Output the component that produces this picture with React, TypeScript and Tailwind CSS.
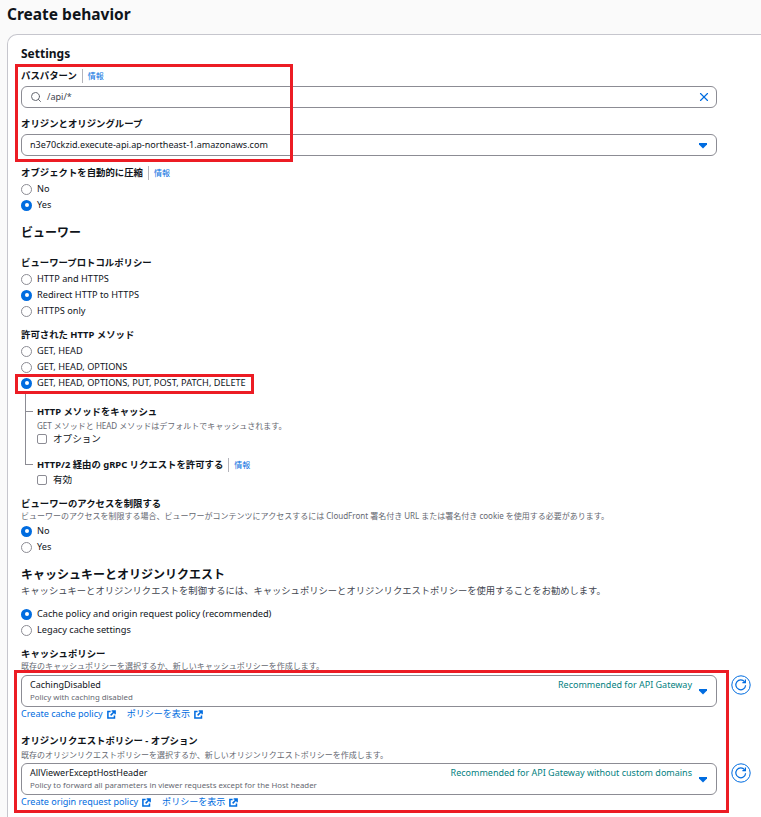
import React from 'react';
import { Search, X } from 'lucide-react';

const Info = () => (
  <span className="ml-[5px] border-l border-[#b4b4bb] pl-[5px] text-[8px] font-normal leading-[14px] text-[#006ce0]">情報</span>
);

const Label = ({ children, info, className = '' }: { children: React.ReactNode; info?: boolean; className?: string }) => (
  <div className={`flex h-[14px] items-center text-[9.4px] font-bold leading-[14px] text-[#0f141a] ${className}`}>
    {children}
    {info && <Info />}
  </div>
);

const Hint = ({ children, className = '' }: { children: React.ReactNode; className?: string }) => (
  <div className={`h-[13px] whitespace-nowrap text-[8px] leading-[13px] text-[#656871] ${className}`}>{children}</div>
);

const Radio = ({ label, checked }: { label: string; checked?: boolean }) => (
  <div className="flex h-[16px] items-center gap-[5px] text-[9.2px] text-[#0f141a]">
    {checked ? (
      <span className="flex h-[11px] w-[11px] items-center justify-center rounded-full bg-[#006ce0]">
        <span className="h-[4px] w-[4px] rounded-full bg-white" />
      </span>
    ) : (
      <span className="h-[11px] w-[11px] rounded-full border border-[#8c8c94] bg-white" />
    )}
    <span>{label}</span>
  </div>
);

const Check = ({ label }: { label: string }) => (
  <div className="flex h-[16px] items-center gap-[6px] pl-[12px] text-[9.6px] text-[#0f141a]">
    <span className="h-[10px] w-[10px] rounded-[2px] border border-[#8c8c94] bg-white" />
    <span>{label}</span>
  </div>
);

const Caret = () => (
  <svg width="10" height="7" viewBox="0 0 10 7" className="shrink-0">
    <path d="M1 1h8v1.5L5 6.5 1 2.5z" fill="#006ce0" />
  </svg>
);

const ExternalIcon = () => (
  <svg width="9" height="9" viewBox="0 0 10 10" fill="none" stroke="#006ce0" strokeWidth="1.7" className="ml-[4px] inline-block">
    <path d="M4 1.7H1v7.3h7.3V6" />
    <path d="M5.2 1h3.8v3.8M8.8 1.2 4 6" />
  </svg>
);

const Refresh = () => (
  <svg width="20" height="20" viewBox="0 0 20 20" fill="none" stroke="#006ce0" className="shrink-0">
    <circle cx="10" cy="10" r="9.2" strokeWidth="1" />
    <path d="M13.7 7a4.9 4.9 0 1 0 .9 3.2" strokeWidth="1.2" />
    <path d="M14.4 4.6v3h-3" strokeWidth="1.2" />
  </svg>
);

const LinkRow = ({ create }: { create: string }) => (
  <div className="flex h-[14px] items-center gap-[11px] text-[9.05px] leading-[14px] text-[#006ce0]">
    <span className="flex items-center">{create}<ExternalIcon /></span>
    <span className="flex items-center">ポリシーを表示<ExternalIcon /></span>
  </div>
);

const PolicySelect = ({ name, desc, tag }: { name: string; desc: string; tag: string }) => (
  <div className="flex items-start gap-[14px]">
    <div className="flex h-[32px] w-[696px] items-center rounded-[6px] border border-[#8c8c94] bg-white px-[8px]">
      <div className="min-w-0 flex-1 pb-[2px]">
        <div className="flex items-center justify-between pr-[6px] text-[9px] leading-[13px]">
          <span className="text-[#0f141a]">{name}</span>
          <span className="text-[#037f7f]">{tag}</span>
        </div>
        <div className="text-[7.85px] leading-[12px] text-[#656871]">{desc}</div>
      </div>
      <Caret />
    </div>
    <Refresh />
  </div>
);

export default function App() {
  return (
    <div
      className="relative h-[817px] w-[761px] overflow-hidden bg-[#fafafa]"
      style={{ fontFamily: '"Noto Sans", "Noto Sans CJK JP", sans-serif' }}
    >
      <h1 className="flex h-[34px] items-start pl-[7px] pt-[2px] text-[15.5px] font-bold leading-[24px] text-[#0f141a]">
        Create behavior
      </h1>

      <div className="-mr-[20px] ml-[7px] h-[783px] rounded-tl-[10px] border-l border-t border-[#c6c6cd] bg-white pl-[13px] pt-[10px]">
        <div className="h-[18px] text-[12px] font-bold leading-[18px] text-[#0f141a]">Settings</div>

        <Label className="mt-[6px]" info>パスパターン</Label>
        <div className="mt-[3px] flex h-[22px] w-[696px] items-center rounded-[6px] border border-[#8c8c94] bg-white pl-[8px] pr-[5px] text-[9.1px] text-[#424650]">
          <Search size={12} strokeWidth={2} className="text-[#656871]" />
          <span className="ml-[5px] flex-1">/api/*</span>
          <X size={14} strokeWidth={2} color="#006ce0" />
        </div>

        <Label className="mt-[9px]">オリジンとオリジングループ</Label>
        <div className="mt-[3px] flex h-[22px] w-[696px] items-center justify-between rounded-[6px] border border-[#8c8c94] bg-white px-[8px] text-[9.05px] text-[#0f141a]">
          <span>n3e70ckzid.execute-api.ap-northeast-1.amazonaws.com</span>
          <Caret />
        </div>

        <Label className="mt-[10px]" info>オブジェクトを自動的に圧縮</Label>
        <div className="mt-[1px]">
          <Radio label="No" />
          <Radio label="Yes" checked />
        </div>

        <div className="mt-[11px] h-[18px] text-[12px] font-bold leading-[18px] text-[#0f141a]">ビューワー</div>

        <Label className="mt-[14px]">ビューワープロトコルポリシー</Label>
        <div className="mt-[1px]">
          <Radio label="HTTP and HTTPS" />
          <Radio label="Redirect HTTP to HTTPS" checked />
          <Radio label="HTTPS only" />
        </div>

        <Label className="mt-[9px]">許可された HTTP メソッド</Label>
        <div className="mt-[1px]">
          <Radio label="GET, HEAD" />
          <Radio label="GET, HEAD, OPTIONS" />
          <Radio label="GET, HEAD, OPTIONS, PUT, POST, PATCH, DELETE" checked />
        </div>

        <div className="ml-[4px] mt-[2px] flex">
          <div className="relative h-[72px] w-[8px] border-b border-l border-[#8c8c94]">
            <div className="absolute left-0 top-[18px] h-px w-[7px] bg-[#8c8c94]" />
          </div>
          <div className="-mb-[20px] ml-[4px] pt-[12px]">
            <Label>HTTP メソッドをキャッシュ</Label>
            <Hint>GET メソッドと HEAD メソッドはデフォルトでキャッシュされます。</Hint>
            <div className="-ml-[12px] mt-[-1px]"><Check label="オプション" /></div>
            <Label className="mt-[11px]" info>HTTP/2 経由の gRPC リクエストを許可する</Label>
            <div className="-ml-[12px]"><Check label="有効" /></div>
          </div>
        </div>

        <Label className="mt-[29px]">ビューワーのアクセスを制限する</Label>
        <Hint className="-mt-[2px]">ビューワーのアクセスを制限する場合、ビューワーがコンテンツにアクセスするには CloudFront 署名付き URL または署名付き cookie を使用する必要があります。</Hint>
        <div className="mt-[1px]">
          <Radio label="No" checked />
          <Radio label="Yes" />
        </div>

        <div className="mt-[11px] h-[18px] text-[12px] font-bold leading-[18px] text-[#0f141a]">キャッシュキーとオリジンリクエスト</div>
        <div className="h-[14px] text-[9.3px] leading-[14px] text-[#424650]">キャッシュキーとオリジンリクエストを制御するには、キャッシュポリシーとオリジンリクエストポリシーを使用することをお勧めします。</div>

        <div className="mt-[8px]">
          <Radio label="Cache policy and origin request policy (recommended)" checked />
          <Radio label="Legacy cache settings" />
        </div>

        <Label className="mt-[9px]">キャッシュポリシー</Label>
        <Hint className="-mt-[2px]">既存のキャッシュポリシーを選択するか、新しいキャッシュポリシーを作成します。</Hint>
        <div className="mt-[3px]">
          <PolicySelect name="CachingDisabled" desc="Policy with caching disabled" tag="Recommended for API Gateway" />
        </div>
        <LinkRow create="Create cache policy" />

        <Label className="mt-[13px]">オリジンリクエストポリシー - オプション</Label>
        <Hint>既存のオリジンリクエストポリシーを選択するか、新しいオリジンリクエストポリシーを作成します。</Hint>
        <div className="mt-[2px]">
          <PolicySelect
            name="AllViewerExceptHostHeader"
            desc="Policy to forward all parameters in viewer requests except for the Host header"
            tag="Recommended for API Gateway without custom domains"
          />
        </div>
        <LinkRow create="Create origin request policy" />
      </div>

      {/* red annotation boxes drawn over the console screenshot */}
      <div className="absolute left-[15px] top-[64px] h-[98px] w-[278px] border-[3px] border-[#ec1c24]" />
      <div className="absolute left-[15px] top-[374px] h-[20px] w-[239px] border-[3px] border-[#ec1c24]" />
      <div className="absolute left-[14px] top-[670px] h-[143px] w-[715px] border-[3px] border-[#ec1c24]" />
    </div>
  );
}
